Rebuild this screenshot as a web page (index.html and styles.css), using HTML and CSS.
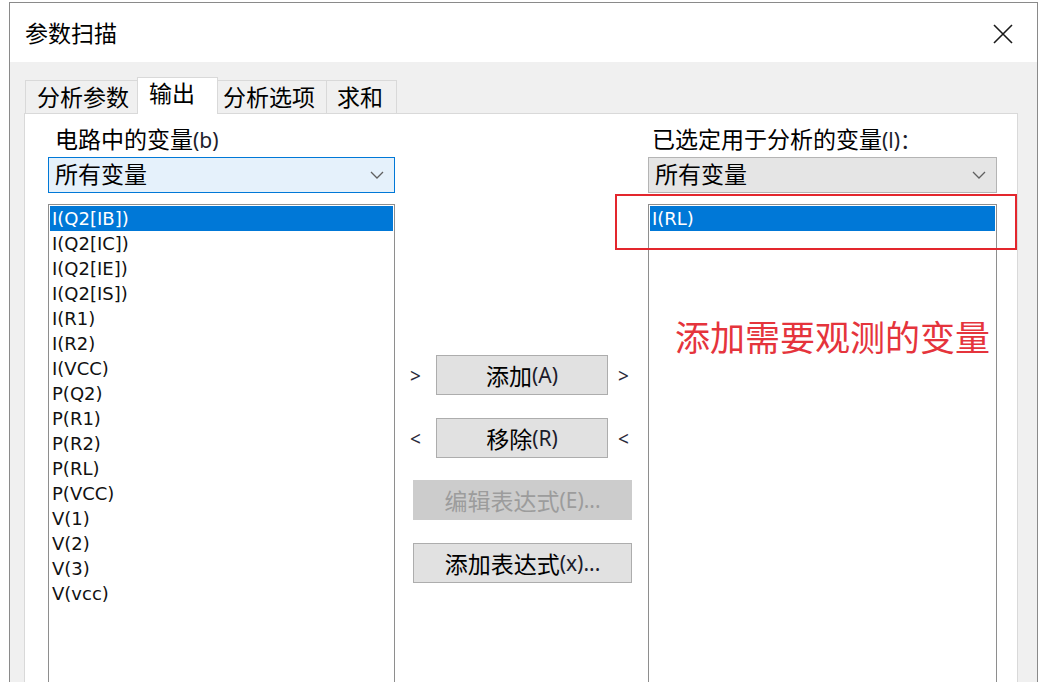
FILE: index.html
```html
<!DOCTYPE html>
<html lang="zh-CN">
<head>
<meta charset="utf-8">
<title>参数扫描</title>
<link rel="stylesheet" href="styles.css">
</head>
<body>
<div class="dialog">
  <div class="titlebar">
    <span class="title">参数扫描</span>
    <svg class="close" width="20" height="20" viewBox="0 0 20 20" aria-label="关闭">
      <path d="M1 1 L19 19 M19 1 L1 19" stroke="#1a1a1a" stroke-width="1.6" fill="none"/>
    </svg>
  </div>
  <div class="body">
    <div class="tabs">
      <div class="tab tab-params">分析参数</div>
      <div class="tab tab-output active">输出</div>
      <div class="tab tab-options">分析选项</div>
      <div class="tab tab-sum">求和</div>
    </div>
    <div class="panel">
      <div class="col col-left">
        <div class="label">电路中的变量<span class="key">(b)</span></div>
        <div class="combo focused">
          <span>所有变量</span>
          <svg class="chev" width="14" height="9" viewBox="0 0 14 9"><polyline points="1,1 7,7 13,1" fill="none" stroke="#606060" stroke-width="1.3"/></svg>
        </div>
        <div class="list">
          <div class="item selected">I(Q2[IB])</div>
          <div class="item">I(Q2[IC])</div>
          <div class="item">I(Q2[IE])</div>
          <div class="item">I(Q2[IS])</div>
          <div class="item">I(R1)</div>
          <div class="item">I(R2)</div>
          <div class="item">I(VCC)</div>
          <div class="item">P(Q2)</div>
          <div class="item">P(R1)</div>
          <div class="item">P(R2)</div>
          <div class="item">P(RL)</div>
          <div class="item">P(VCC)</div>
          <div class="item">V(1)</div>
          <div class="item">V(2)</div>
          <div class="item">V(3)</div>
          <div class="item">V(vcc)</div>
        </div>
      </div>

      <div class="col col-mid">
        <div class="move-row">
          <span class="arrow arrow-l">&gt;</span>
          <button class="btn btn-move">添加<span class="key">(A)</span></button>
          <span class="arrow arrow-r">&gt;</span>
        </div>
        <div class="move-row row-remove">
          <span class="arrow arrow-l">&lt;</span>
          <button class="btn btn-move">移除<span class="key">(R)</span></button>
          <span class="arrow arrow-r">&lt;</span>
        </div>
        <button class="btn btn-wide disabled">编辑表达式<span class="key">(E)...</span></button>
        <button class="btn btn-wide btn-last">添加表达式<span class="key">(x)...</span></button>
      </div>

      <div class="col col-right">
        <div class="label label-right">已选定用于分析的变量<span class="key">(l)：</span></div>
        <div class="combo plain">
          <span>所有变量</span>
          <svg class="chev" width="14" height="9" viewBox="0 0 14 9"><polyline points="1,1 7,7 13,1" fill="none" stroke="#606060" stroke-width="1.3"/></svg>
        </div>
        <div class="list">
          <div class="item selected">I(RL)</div>
        </div>
      </div>

      <div class="callout-box"></div>
      <div class="callout-text">添加需要观测的变量</div>
    </div>
  </div>
</div>
</body>
</html>
```

FILE: styles.css
```css
* {
  box-sizing: border-box;
}

html, body {
  margin: 0;
  padding: 0;
  background: #ffffff;
  overflow: hidden;
}

body {
  font-family: "Noto Sans", "Noto Sans CJK SC", sans-serif;
  font-size: 23px;
  color: #000;
}

.dialog {
  margin: 2px 0 0 9px;
  width: 1029px;
  height: 680px;
  border: 1px solid #8a8a8a;
  border-bottom: none;
  background: #ffffff;
  display: flex;
  flex-direction: column;
}

/* title bar */
.titlebar {
  height: 59px;
  flex: none;
  display: flex;
  align-items: center;
  justify-content: space-between;
  padding: 0 24px 0 15px;
  background: #ffffff;
}

.title {
  font-family: "Noto Sans CJK SC", sans-serif;
  font-size: 23px;
  line-height: 1;
  margin-top: -1px;
}

.close {
  display: block;
  margin-top: 2px;
}

/* dialog body */
.body {
  flex: 1;
  min-height: 0;
  background: #f0f0f0;
  padding-top: 15px;
  display: flex;
  flex-direction: column;
}

.tabs {
  display: flex;
  align-items: flex-end;
  padding-left: 15px;
  height: 36px;
  flex: none;
  position: relative;
  z-index: 1;
}

.tab {
  height: 33px;
  border: 1px solid #d9d9d9;
  border-bottom: none;
  background: #f0f0f0;
  font-family: "Noto Sans CJK SC", sans-serif;
  font-size: 23px;
  line-height: 30px;
  white-space: nowrap;
  margin-right: -1px;
}

.tab.active {
  height: 37px;
  background: #ffffff;
  line-height: 28px;
  margin-bottom: -1px;
  position: relative;
}

.tab-params { width: 113px; padding-left: 11px; }
.tab-output { width: 81px; padding-left: 11px; }
.tab-options { width: 110px; padding-left: 5px; }
.tab-sum { width: 71px; padding-left: 10px; }

/* tab page */
.panel {
  flex: 1;
  min-height: 0;
  margin: 0 19px 0 14px;
  background: #ffffff;
  border: 1px solid #d9d9d9;
  border-bottom: none;
  padding-top: 11px;
  display: flex;
  position: relative;
}

.col {
  display: flex;
  flex-direction: column;
}

.col-left {
  width: 347px;
  margin-left: 23px;
}

.col-mid {
  width: 253px;
  padding-top: 230px;
}

.col-right {
  width: 349px;
}

.label {
  height: 32px;
  line-height: 26px;
  padding-left: 7px;
  font-family: "Noto Sans CJK SC", sans-serif;
  white-space: nowrap;
}

.label-right {
  padding-left: 4px;
}

.key {
  font-family: "Noto Sans", sans-serif;
  font-size: 21px;
  color: #1c1c2c;
}

.combo {
  height: 36px;
  flex: none;
  display: flex;
  align-items: center;
  justify-content: space-between;
  padding: 0 10px 0 6px;
  font-family: "Noto Sans CJK SC", sans-serif;
  font-size: 23px;
  border: 1px solid #adadad;
}

.combo span {
  line-height: 1;
  margin-top: -3px;
}

.combo.focused {
  background: #e5f1fb;
  border-color: #0078d7;
}

.combo.plain {
  background: #e5e5e5;
  border-color: #b4b4b4;
}

.chev {
  display: block;
}

.list {
  flex: 1;
  margin-top: 11px;
  border: 1px solid #8e8e8e;
  border-bottom: none;
  padding: 1px;
  background: #ffffff;
}

.item {
  height: 25px;
  line-height: 25px;
  padding-left: 2px;
  font-family: "DejaVu Sans", sans-serif;
  font-size: 18px;
  color: #111;
  white-space: nowrap;
}

.item.selected {
  background: #0078d7;
  color: #ffffff;
}

/* transfer buttons */
.move-row {
  display: flex;
  align-items: center;
  height: 40px;
  margin-left: 15px;
}

.row-remove {
  margin-top: 23px;
}

.arrow {
  font-family: "Noto Sans", sans-serif;
  font-size: 19px;
  color: #2a2a3a;
  line-height: 1;
}

.arrow-l {
  width: 26px;
  margin-top: 2px;
}

.arrow-r {
  margin-left: 10px;
  margin-top: 2px;
}

.btn {
  height: 40px;
  flex: none;
  border: 1px solid #adadad;
  background: #e1e1e1;
  font-family: "Noto Sans CJK SC", sans-serif;
  font-size: 23px;
  color: #000;
  padding: 0;
  line-height: 1;
  display: flex;
  align-items: center;
  justify-content: center;
}

.btn-move {
  width: 172px;
}

.btn-wide {
  width: 219px;
  margin-left: 18px;
  margin-top: 22px;
}

.btn-last {
  margin-top: 23px;
}

.btn.disabled {
  background: #cccccc;
  border-color: #cccccc;
  color: #9c9c9c;
}

.btn.disabled .key {
  color: #9c9c9c;
}

/* annotation drawn over the selected list */
.callout-box {
  position: absolute;
  left: 590px;
  top: 80px;
  width: 402px;
  height: 56px;
  border: 2px solid #e3262d;
}

.callout-text {
  position: absolute;
  left: 650px;
  top: 204px;
  font-family: "Noto Sans CJK SC", sans-serif;
  font-size: 35px;
  line-height: 35px;
  color: #e5343c;
  white-space: nowrap;
}
```
